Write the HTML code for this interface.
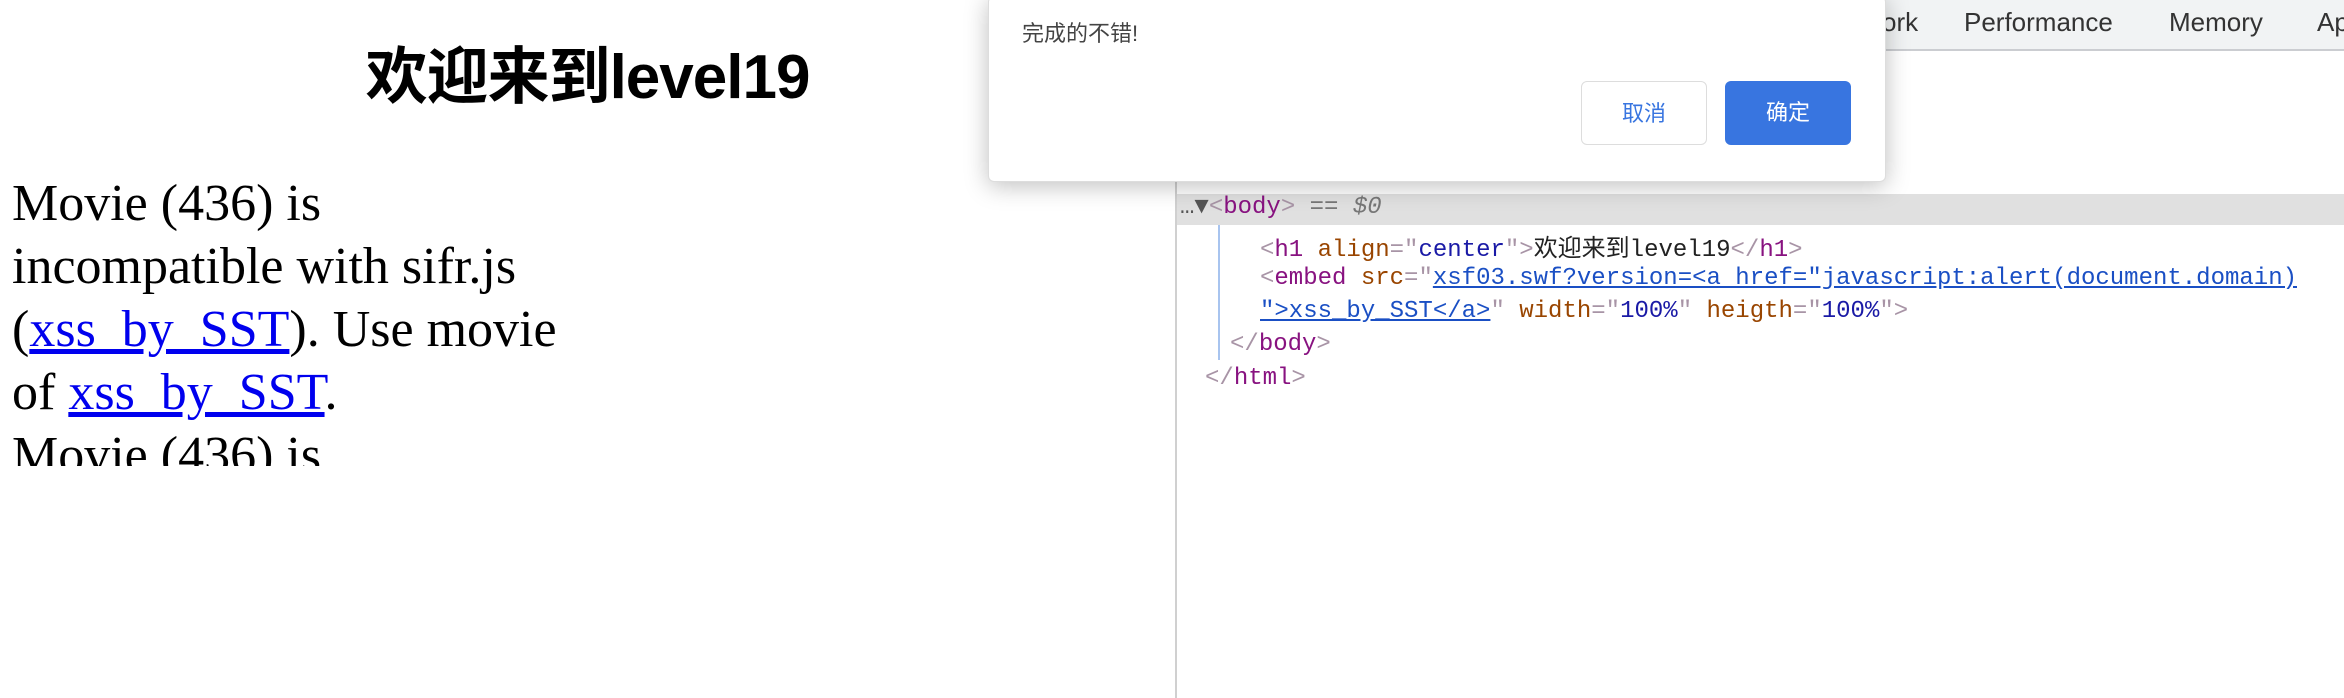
<!DOCTYPE html>
<html><head><meta charset="utf-8"><style>
body{margin:0;width:2344px;height:698px;position:relative;overflow:hidden;background:#fff;font-family:"Liberation Sans","Noto Sans CJK SC",sans-serif}
.abs{position:absolute;white-space:nowrap}
h1{position:absolute;left:0;width:1175px;top:36px;margin:0;text-align:center;font-size:62px;font-weight:bold;line-height:84px;letter-spacing:-1px}
.txt{position:absolute;left:12px;top:172px;width:700px;height:294px;overflow:hidden;font-family:"Liberation Serif",serif;font-size:52px;line-height:63px;white-space:nowrap}
.txt a{color:#00e;text-decoration:underline}
.div{position:absolute;left:1175px;top:0;width:2px;height:698px;background:#d0d0d0}
.tabs{position:absolute;left:1177px;top:0;right:0;height:49px;background:#f1f3f4;border-bottom:2px solid #cbcdd1}
.tab{position:absolute;top:7px;font-size:26px;color:#333}
.code{font-family:"Liberation Mono","Noto Sans CJK SC",monospace;font-size:24px;letter-spacing:0px;color:#222}
.t{color:#881280}.b{color:#a894a6}.an{color:#994500}.av{color:#1a1aa6}.lk{color:#1a4fc4;text-decoration:underline}
.sel{position:absolute;left:1177px;right:0;top:194px;height:31px;background:#e0e0e0}
.dlg{position:absolute;left:988px;top:-4px;width:896px;height:184px;background:#fff;border-radius:6px;box-shadow:0 4px 24px rgba(0,0,0,.25);border:1px solid #ddd}
.btn{position:absolute;top:84px;width:126px;height:64px;border-radius:6px;font-size:22px;line-height:64px;text-align:center}
</style></head><body>
<h1>欢迎来到level19</h1>
<div class="txt">Movie (436) is<br>incompatible with sifr.js<br>(<a>xss_by_SST</a>). Use movie<br>of <a>xss_by_SST</a>.<br>Movie (436) is</div>
<div class="div"></div>
<div class="tabs">
<span class="tab" style="left:705px">ork</span>
<span class="tab" style="left:787px">Performance</span>
<span class="tab" style="left:992px">Memory</span>
<span class="tab" style="left:1140px">Ap</span>
</div>
<div class="abs code" style="left:1210px;top:158px"><span class="b">▸ &lt;</span><span class="t">head</span><span class="b">&gt;</span>…<span class="b">&lt;/</span><span class="t">head</span><span class="b">&gt;</span></div>
<div class="sel"></div>
<div class="abs" style="left:1218px;top:225px;width:2px;height:135px;background:#a8c4ef"></div>
<div class="abs code" style="left:1180px;top:194px"><span style="color:#555">…▼</span><span class="b">&lt;</span><span class="t">body</span><span class="b">&gt;</span> <span style="color:#777">== <i>$0</i></span></div>
<div class="abs code" style="left:1260px;top:228px"><span class="b">&lt;</span><span class="t">h1</span> <span class="an">align</span><span class="b">="</span><span class="av">center</span><span class="b">"&gt;</span>欢迎来到level19<span class="b">&lt;/</span><span class="t">h1</span><span class="b">&gt;</span></div>
<div class="abs code" style="left:1260px;top:265px"><span class="b">&lt;</span><span class="t">embed</span> <span class="an">src</span><span class="b">="</span><span class="lk">xsf03.swf?version=&lt;a href="javascript:alert(document.domain)</span></div>
<div class="abs code" style="left:1260px;top:298px"><span class="lk">"&gt;xss_by_SST&lt;/a&gt;</span><span class="b">"</span> <span class="an">width</span><span class="b">="</span><span class="av">100%</span><span class="b">"</span> <span class="an">heigth</span><span class="b">="</span><span class="av">100%</span><span class="b">"&gt;</span></div>
<div class="abs code" style="left:1230px;top:331px"><span class="b">&lt;/</span><span class="t">body</span><span class="b">&gt;</span></div>
<div class="abs code" style="left:1205px;top:365px"><span class="b">&lt;/</span><span class="t">html</span><span class="b">&gt;</span></div>
<div class="dlg">
<div class="abs" style="left:33px;top:19px;font-size:22px;color:#444">完成的不错!</div>
<div class="btn" style="left:592px;border:1px solid #ddd;color:#3875e0;box-sizing:border-box">取消</div>
<div class="btn" style="left:736px;background:#3875e0;color:#fff">确定</div>
</div>
</body></html>
